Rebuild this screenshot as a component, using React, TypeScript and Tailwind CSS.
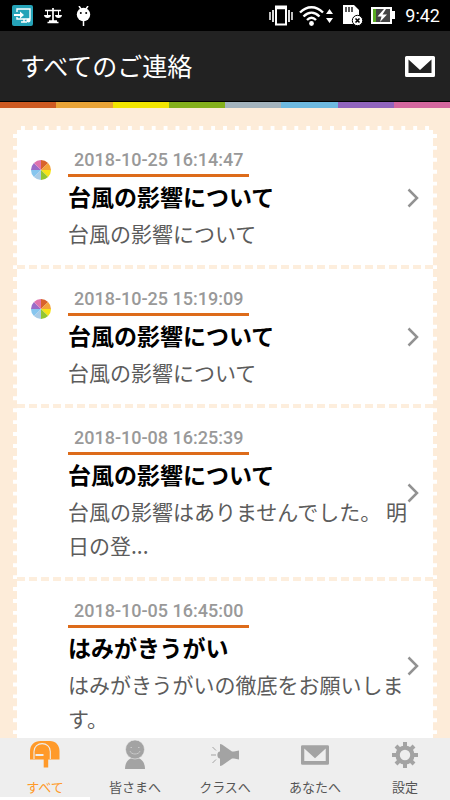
import React, { useState } from "react";

interface Notice {
  id: number;
  date: string;
  title: string;
  body: string;
  unread: boolean;
}

const notices: Notice[] = [
  { id: 1, date: "2018-10-25 16:14:47", title: "台風の影響について", body: "台風の影響について", unread: true },
  { id: 2, date: "2018-10-25 15:19:09", title: "台風の影響について", body: "台風の影響について", unread: true },
  {
    id: 3,
    date: "2018-10-08 16:25:39",
    title: "台風の影響について",
    body: "台風の影響はありませんでした。 明日の登...",
    unread: false,
  },
  {
    id: 4,
    date: "2018-10-05 16:45:00",
    title: "はみがきうがい",
    body: "はみがきうがいの徹底をお願いします。",
    unread: false,
  },
];

const StatusBar = () => (
  <div className="flex h-[31px] shrink-0 items-center bg-black pr-[10px] pl-3 text-white">
    <svg width="21" height="21" viewBox="0 0 21 21">
      <rect width="21" height="21" rx="2" fill="#25a3b8" />
      <path d="M5 7V4h13v10H5v-2M9 17h6M12 14v3" fill="none" stroke="#fff" strokeWidth="1.4" />
      <path d="M2 9h6V6.5l4 3.500-4 3.500V11H2z" fill="#fff" />
      <circle cx="16.5" cy="15.5" r="2" fill="#fff" />
    </svg>
    <svg className="ml-[11px]" width="18" height="16" viewBox="0 0 18 16" fill="none" stroke="#fff">
      <path d="M1 2.500h16M9 0v13M3.500 14.500h11M5 13h8" strokeWidth="1.7" />
      <path d="M3.500 3v5M14.500 3v5" strokeWidth="1" />
      <path d="M0 7h7c0 4-7 4-7 0zM11 7h7c0 4-7 4-7 0z" fill="#fff" stroke="none" />
    </svg>
    <svg className="ml-[14px]" width="15" height="20" viewBox="0 0 15 20">
      <path d="M3 0l2 3M12 0l-2 3M7.500 14v6" stroke="#fff" strokeWidth="1.5" />
      <circle cx="7.5" cy="8.5" r="6.7" fill="#fff" />
      <circle cx="4.8" cy="7" r="1" fill="#000" />
      <circle cx="10.2" cy="7" r="1" fill="#000" />
    </svg>
    <svg className="ml-auto" width="24" height="21" viewBox="0 0 24 21" fill="none" stroke="#fff">
      <rect x="7" y="1.5" width="10" height="18" strokeWidth="2" />
      <path d="M7 3h10" strokeWidth="2.5" />
      <path d="M4 5v12M20 5v12" strokeWidth="1.7" />
      <path d="M1 7v8M23 7v8" strokeWidth="1.5" />
    </svg>
    <svg className="ml-[6px]" width="34" height="20" viewBox="0 0 34 20" fill="none" stroke="#fff">
      <path d="M1 6.500c7-7 16-7 23 0M4.500 10.500c5-5 11-5 16 0M8 14c3-3 6-3 9 0" strokeWidth="2.4" />
      <circle cx="12.5" cy="17.5" r="2.4" fill="#fff" stroke="none" />
      <path d="M27 8l3.500-5L34 8zM27 12l3.500 5 3.500-5z" fill="#fff" stroke="none" />
    </svg>
    <svg className="ml-[9px]" width="21" height="21" viewBox="0 0 21 21">
      <path d="M1 0h11l5 5v14H1z" fill="#fff" />
      <path d="M4 2v5M7 2v5M10 2v5" stroke="#000" strokeWidth="1.3" />
      <circle cx="15.5" cy="15.5" r="5.2" fill="#fff" stroke="#000" />
      <path d="M13.500 13.500l4 4M17.500 13.500l-4 4" stroke="#000" strokeWidth="1.6" />
    </svg>
    <svg className="ml-2" width="24" height="17" viewBox="0 0 24 17">
      <path d="M0 0h21v4h3v8h-3v5H0z" fill="#fff" />
      <path d="M2 2h3v13H2z" fill="#59ab22" />
      <path d="M5 2h14v13H5z" fill="#444" />
      <path d="M13 2L6.500 9.500h4L9 15l7-7.500h-4.500L15 2z" fill="#fff" />
    </svg>
    <span className="ml-[10px] font-[Roboto,sans-serif] text-[18px]">9:42</span>
  </div>
);

const RainbowBar = () => (
  <div className="flex h-[7px] shrink-0 border-t border-black">
    <div className="flex-1 bg-[#ce5a22]" />
    <div className="flex-1 bg-[#e8a336]" />
    <div className="flex-1 bg-[#f2e500]" />
    <div className="flex-1 bg-[#84b01c]" />
    <div className="flex-1 bg-[#a3b3bd]" />
    <div className="flex-1 bg-[#6db9e0]" />
    <div className="flex-1 bg-[#9164bd]" />
    <div className="flex-1 bg-[#d4679e]" />
  </div>
);

const EnvelopeIcon = ({ width = 30, height = 21 }: { width?: number; height?: number }) => (
  <svg width={width} height={height} viewBox="0 0 30 21" fill="currentColor">
    <path
      fillRule="evenodd"
      d="M1.500 0h27a1.500 1.500 0 0 1 1.500 1.500v18a1.500 1.500 0 0 1-1.500 1.500h-27a1.500 1.500 0 0 1-1.500-1.500v-18A1.500 1.500 0 0 1 1.500 0zM3.500 3.500v13.500h23V3.500L15 14z"
    />
  </svg>
);

const WheelIcon = () => (
  <svg width="20" height="20" viewBox="-10 -10 20 20">
    <path d="M0 0V-10A10 10 0 0 1 7.070-7.070z" fill="#d9622b" />
    <path d="M0 0L7.070-7.070A10 10 0 0 1 10 0z" fill="#f4a33a" />
    <path d="M0 0H10A10 10 0 0 1 7.070 7.070z" fill="#f6e416" />
    <path d="M0 0L7.070 7.070A10 10 0 0 1 0 10z" fill="#94c62f" />
    <path d="M0 0V10A10 10 0 0 1-7.070 7.070z" fill="#a9cbe6" />
    <path d="M0 0L-7.070 7.070A10 10 0 0 1-10 0z" fill="#86c5ee" />
    <path d="M0 0H-10A10 10 0 0 1-7.070-7.070z" fill="#9a6cc8" />
    <path d="M0 0L-7.070-7.070A10 10 0 0 1 0-10z" fill="#df73ad" />
  </svg>
);

const NoticeItem: React.FC<{ notice: Notice }> = ({ notice }) => (
  <li className="border-b-4 border-dashed border-[#fdeedd]">
    <a href="#" className="flex items-center pt-4 pr-[14px] pb-[15px]">
      <div className="w-[51px] shrink-0 self-start pt-[14px] pl-[14px]">{notice.unread && <WheelIcon />}</div>
      <div className="min-w-0 flex-1">
        <time className="block w-fit border-b-3 border-[#dd6b1a] px-[6px] font-[Roboto,sans-serif] text-[18px] leading-7 font-medium text-[#999]">
          {notice.date}
        </time>
        <h2 className="text-[23px] leading-[39px] font-bold text-black">{notice.title}</h2>
        <p className="text-[21px] leading-[34px] text-[#5c5c5c]">{notice.body}</p>
      </div>
      <svg className="-ml-1 shrink-0" width="12" height="20" viewBox="0 0 12 20" fill="none" stroke="#929292" strokeWidth="2.5">
        <path d="M1.500 1.500L10 10l-8.500 8.500" />
      </svg>
    </a>
  </li>
);

const tabs = [
  {
    label: "すべて",
    icon: (
      <svg width="30" height="27" viewBox="0 0 30 27" fill="currentColor">
        <path d="M0 18.500V10.500C0 4 4.500 0 10.500 0H20c5.500 0 9.500 4 9.500 10v8.500H18.200V26.500h-4.500v-8z" />
        <path d="M4 18v-7.500c0-10.500 16.300-10.500 16.300 0V18" fill="none" stroke="#eee" strokeWidth="1.1" />
        <path d="M5.500 14h8" stroke="#eee" strokeWidth="2" />
      </svg>
    ),
  },
  {
    label: "皆さまへ",
    icon: (
      <svg width="22" height="29" viewBox="0 0 22 29" fill="currentColor">
        <path d="M1 29c0-7 4-11.500 10-11.500S21 22 21 29z" />
        <circle cx="11" cy="9.5" r="9.5" stroke="#eee" strokeWidth="0.6" />
        <path d="M6 11c1 4 9 4 10 0M6.500 7.500h1.500M14 7.500h1.500" fill="none" stroke="#c8c8c8" />
      </svg>
    ),
  },
  {
    label: "クラスへ",
    icon: (
      <svg width="30" height="22" viewBox="0 0 30 22" fill="currentColor">
        <path d="M10 0L12 0.500L22 7.500H24L29 6.500V15.500L24 14.500H22L12 21.500L10 22V14.500C6.500 14.500 6.500 7.500 10 7.500z" />
        <path d="M2.500 3l3.500 3.500M1 11h5M2.500 19l3.500-3.500" stroke="currentColor" />
      </svg>
    ),
  },
  { label: "あなたへ", icon: <EnvelopeIcon width={28} height={20} /> },
  {
    label: "設定",
    icon: (
      <svg width="26" height="26" viewBox="-13 -13 26 26" fill="none" stroke="currentColor">
        <circle r="7.4" strokeWidth="4.4" />
        <path d="M0-13V-8M0 13V8M-13 0H-8M13 0H8M-9-9l3 3M9-9l-3 3M-9 9l3-3M9 9l-3-3" strokeWidth="4" />
      </svg>
    ),
  },
];

const App = () => {
  const [activeTab, setActiveTab] = useState(0);

  return (
    <div className="flex h-screen flex-col bg-[#fdecd9] font-['Noto_Sans_CJK_JP',sans-serif]">
      <StatusBar />
      <header className="flex h-[70px] shrink-0 items-center justify-between bg-[#222] pr-[15px] pl-5 text-white">
        <h1 className="text-[25px]">すべてのご連絡</h1>
        <button type="button" aria-label="メール">
          <EnvelopeIcon />
        </button>
      </header>
      <RainbowBar />
      <main className="flex-1 overflow-hidden px-[13px] pt-[18px]">
        <ul className="border-4 border-b-0 border-dashed border-[#fdecd9] bg-white">
          {notices.map((notice) => (
            <NoticeItem key={notice.id} notice={notice} />
          ))}
        </ul>
      </main>
      <nav className="flex h-[62px] shrink-0 bg-[#eee]">
        {tabs.map((tab, index) => (
          <button
            key={tab.label}
            type="button"
            onClick={() => setActiveTab(index)}
            className={
              index === activeTab
                ? "flex flex-1 flex-col items-center border-b-3 border-white text-[#ff9a2a]"
                : "flex flex-1 flex-col items-center border-b-3 border-transparent text-[#a3a3a3]"
            }
          >
            <span className="flex h-[35px] items-center">{tab.icon}</span>
            <span className={index === activeTab ? "pt-[6px] text-[13px] leading-5" : "pt-[6px] text-[13px] leading-5 text-[#555]"}>
              {tab.label}
            </span>
          </button>
        ))}
      </nav>
    </div>
  );
};

export default App;
